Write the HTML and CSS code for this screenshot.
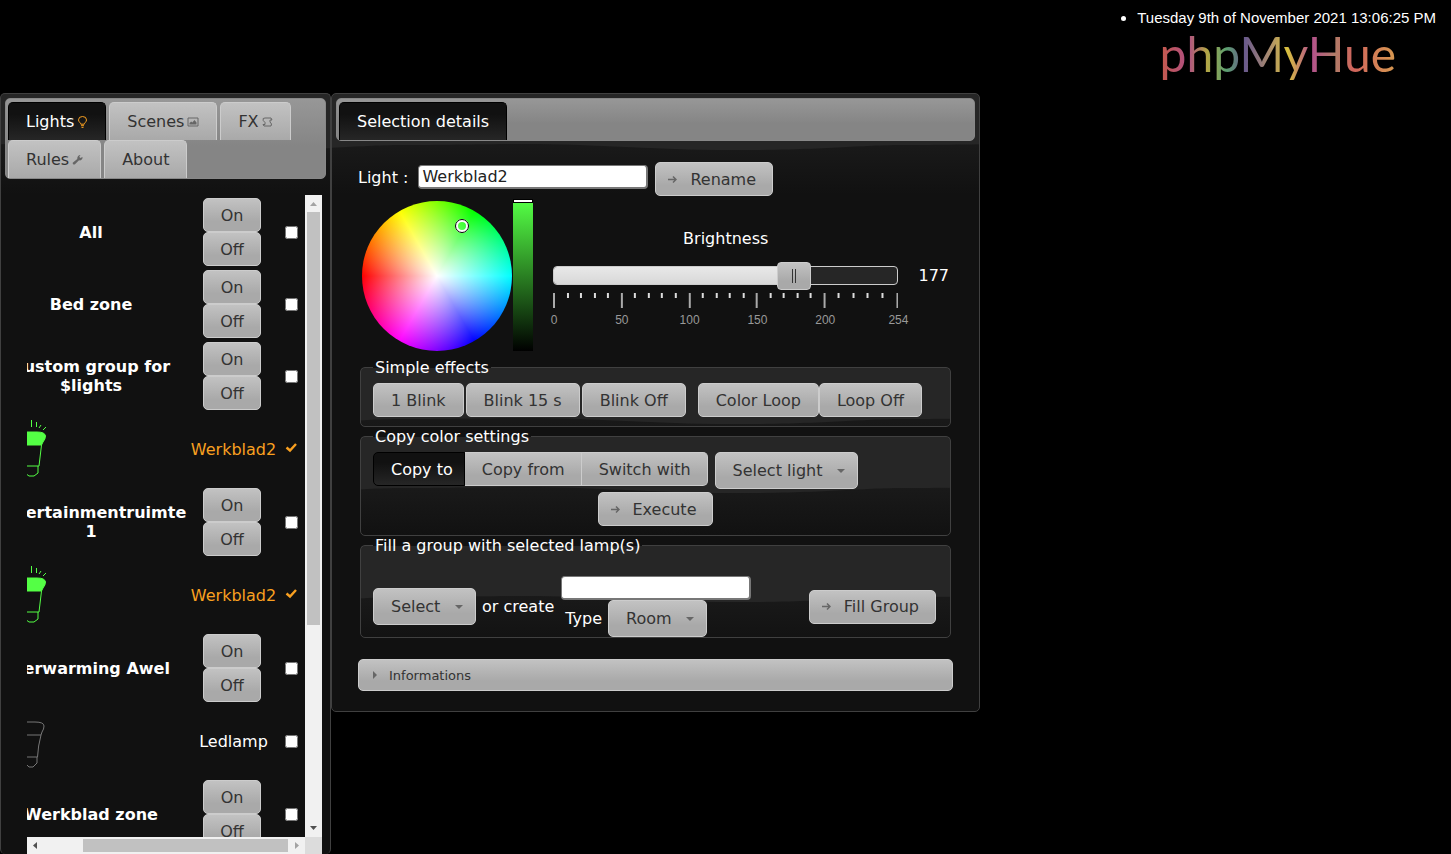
FILE: index.html
```html
<!DOCTYPE html>
<html lang="en">
<head>
  <meta charset="UTF-8" />
  <meta name="viewport" content="width=device-width, initial-scale=1.0" />
  <title>phpMyHue</title>
  <link rel="stylesheet" href="styles.css">
</head>
<body>

  <header class="top">
    <ul class="clock">
      <li>Tuesday 9th of November 2021 13:06:25 PM</li>
    </ul>
    <div class="logo">phpMyHue</div>
  </header>

  <main class="columns">

    <!-- Lights list -->
    <section class="panel lights">
      <nav class="tabs">
        <a href="#lights" class="tab active">Lights<svg width="11" height="12" viewBox="0 0 11 12"><path d="M3.800 8.200C3.800 6.800 1.500 6 1.500 3.900a4 3.400 0 0 1 8 0c0 2.100-2.200 2.900-2.200 4.300zM4 9.700h3M4.500 11.400h2" /></svg></a>
        <a href="#scenes" class="tab">Scenes<svg width="12" height="10" viewBox="0 0 12 10"><path d="M1 1h10v8H1z" /><path class="solid" d="M2.500 7.500V6l1.700-1.500L5.300 5.500 7.500 3l2 2.500v2z" /></svg></a>
        <a href="#fx" class="tab">FX<svg width="11" height="10" viewBox="0 0 11 10"><path d="M3 1h6L10 3H8v2l1.500 2-.5 2H2L1 7.500h2V5.500L1.200 3.500 1.200 1.500z" /></svg></a>
        <a href="#rules" class="tab">Rules<svg width="11" height="11" viewBox="0 0 11 11"><path class="solid" d="M1 8.500 5.300 5C5 3 6.300 1 8.500 1L7.300 2.800l1 1.200L10.500 3c.3 2.200-1.500 3.800-3.500 3.300L3 10.300C1.800 11.300 0 9.700 1 8.500z" /></svg></a>
        <a href="#about" class="tab">About</a>
      </nav>

      <div class="scroller">
        <div class="viewport">
          <table class="light-list">
            <colgroup><col class="col-name"><col class="col-action"><col class="col-check"></colgroup>
            <tr>
              <th>All</th>
              <td><button class="btn">On</button><button class="btn">Off</button></td>
              <td><input type="checkbox" aria-label="All"></td>
            </tr>
            <tr>
              <th>Bed zone</th>
              <td><button class="btn">On</button><button class="btn">Off</button></td>
              <td><input type="checkbox" aria-label="Bed zone"></td>
            </tr>
            <tr>
              <th>Custom group for $lights</th>
              <td><button class="btn">On</button><button class="btn">Off</button></td>
              <td><input type="checkbox" aria-label="Custom group for $lights"></td>
            </tr>
            <tr class="lamp selected">
              <td><svg class="bulb" width="32" height="58" viewBox="0 0 32 58"><path class="glass" d="M2 16Q3 12 9 12H22Q30 12 30.500 16Q30.500 19 28 22L26.500 25H6Z" /><path d="M26.500 25 24 46H8L6 25M23 46V53L19 56H14L10 53V46M11.500 1v6M16.500 0v7M21.500 2v5M26 5l-2 3M31 7l-3 3M7 3l1 4M2 6l2 3" /></svg></td>
              <td><label for="werk1">Werkblad2</label></td>
              <td><input type="checkbox" id="werk1" checked></td>
            </tr>
            <tr>
              <th>Entertainmentruimte 1</th>
              <td><button class="btn">On</button><button class="btn">Off</button></td>
              <td><input type="checkbox" aria-label="Entertainmentruimte 1"></td>
            </tr>
            <tr class="lamp selected">
              <td><svg class="bulb" width="32" height="58" viewBox="0 0 32 58"><path class="glass" d="M2 16Q3 12 9 12H22Q30 12 30.500 16Q30.500 19 28 22L26.500 25H6Z" /><path d="M26.500 25 24 46H8L6 25M23 46V53L19 56H14L10 53V46M11.500 1v6M16.500 0v7M21.500 2v5M26 5l-2 3M31 7l-3 3M7 3l1 4M2 6l2 3" /></svg></td>
              <td><label for="werk2">Werkblad2</label></td>
              <td><input type="checkbox" id="werk2" checked></td>
            </tr>
            <tr>
              <th>Verwarming Awel</th>
              <td><button class="btn">On</button><button class="btn">Off</button></td>
              <td><input type="checkbox" aria-label="Verwarming Awel"></td>
            </tr>
            <tr class="lamp">
              <td><svg class="bulb off" width="32" height="58" viewBox="0 0 32 58"><path d="M2 14Q3 10 9 10H20Q29 10 29 14Q29 17 27 20L26 23Q23 34 22.500 45H8L6 23ZM6 23H26M22 45V51L18 55H14L10 51V45" /></svg></td>
              <td><label for="ledlamp">Ledlamp</label></td>
              <td><input type="checkbox" id="ledlamp"></td>
            </tr>
            <tr>
              <th>Werkblad zone</th>
              <td><button class="btn">On</button><button class="btn">Off</button></td>
              <td><input type="checkbox" aria-label="Werkblad zone"></td>
            </tr>
          </table>
        </div>
        <div class="bar vertical">
          <svg width="17" height="17" viewBox="0 0 17 17"><path class="dim" d="M5 11h7L8.500 7z" /></svg>
          <div class="track"><div class="thumb"></div></div>
          <svg width="17" height="17" viewBox="0 0 17 17"><path d="M5 6h7l-3.500 4z" /></svg>
        </div>
        <div class="bar horizontal">
          <svg width="17" height="17" viewBox="0 0 17 17"><path d="M10 5v7L6 8.500z" /></svg>
          <div class="track"><div class="thumb"></div></div>
          <svg width="17" height="17" viewBox="0 0 17 17"><path class="dim" d="M7 5v7l4-3.500z" /></svg>
        </div>
        <div class="corner"></div>
      </div>
    </section>

    <!-- Selection details -->
    <section class="panel details">
      <nav class="tabs">
        <a href="#details" class="tab active">Selection details</a>
      </nav>

      <div class="details-body">
        <form class="rename">
          <label for="lightName">Light :</label>
          <input type="text" id="lightName" class="text-input" value="Werkblad2">
          <button type="button" class="btn btn-arrow">Rename</button>
        </form>

        <div class="color-row">
          <div class="wheel"><span class="wheel-marker"></span></div>
          <div class="shade">
            <input type="range" class="shade-range" min="0" max="100" value="100" aria-label="Shade">
          </div>
          <div class="brightness">
            <label for="brightness">Brightness</label>
            <div class="slider">
              <div class="slider-fill" style="width: 69.700%"></div>
              <input type="range" id="brightness" class="slider-range" min="0" max="254" value="177">
            </div>
            <svg class="ticks" viewBox="0 0 346 15" preserveAspectRatio="none">
              <path class="major" d="M1 0v15M69 0v15M137 0v15M204 0v15M272 0v15M345 0v15" />
              <path class="minor" d="M15 0v5M28 0v5M42 0v5M55 0v5M82 0v5M96 0v5M109 0v5M123 0v5M150 0v5M164 0v5M177 0v5M191 0v5M218 0v5M231 0v5M245 0v5M258 0v5M286 0v5M301 0v5M315 0v5M330 0v5" />
            </svg>
            <div class="scale">
              <span>0</span><span>50</span><span>100</span><span>150</span><span>200</span><span>254</span>
            </div>
          </div>
          <output class="level" for="brightness">177</output>
        </div>

        <fieldset class="box">
          <legend>Simple effects</legend>
          <div class="effects">
            <div class="group">
              <button class="btn">1 Blink</button>
              <button class="btn">Blink 15 s</button>
              <button class="btn">Blink Off</button>
            </div>
            <div class="group tight">
              <button class="btn">Color Loop</button>
              <button class="btn">Loop Off</button>
            </div>
          </div>
        </fieldset>

        <fieldset class="box">
          <legend>Copy color settings</legend>
          <div class="copy">
            <div class="segmented">
              <input type="radio" name="copy" id="copyTo" checked><label for="copyTo">Copy to</label>
              <input type="radio" name="copy" id="copyFrom"><label for="copyFrom">Copy from</label>
              <input type="radio" name="copy" id="switchWith"><label for="switchWith">Switch with</label>
            </div>
            <select class="select" aria-label="Light">
              <option>Select light</option>
            </select>
          </div>
          <div class="execute">
            <button class="btn btn-arrow">Execute</button>
          </div>
        </fieldset>

        <fieldset class="box fill-box">
          <legend>Fill a group with selected lamp(s)</legend>
          <div class="fill">
            <select class="select" aria-label="Group">
              <option>Select</option>
            </select>
            <label for="groupName" class="or">or create</label>
            <div class="create">
              <input type="text" id="groupName" class="text-input">
              <div class="type">
                <label for="groupType">Type</label>
                <select class="select" id="groupType">
                  <option>Room</option>
                </select>
              </div>
            </div>
            <button class="btn btn-arrow fill-btn">Fill Group</button>
          </div>
        </fieldset>

        <button class="info">Informations</button>
      </div>
    </section>

  </main>

</body>
</html>
```
FILE: styles.css
```css
* {
  box-sizing: border-box;
}

body {
  margin: 0;
  height: 100vh;
  display: flex;
  flex-direction: column;
  overflow: hidden;
  background-color: #000;
  color: #fff;
  font-family: "DejaVu Sans", Verdana, sans-serif;
  font-size: 16px;
}

button,
input,
select {
  font: inherit;
  margin: 0;
}

/* Header */
.top {
  flex: none;
  height: 93px;
  padding: 8px 15px 0;
  display: flex;
  flex-direction: column;
  align-items: flex-end;
}

.clock {
  margin: 0;
  padding-left: 20px;
  font-family: "Liberation Sans", Arial, sans-serif;
  font-size: 15px;
  line-height: 20px;
}

.logo {
  margin-right: 40px;
  font-family: Lato, sans-serif;
  font-weight: 400;
  font-size: 48px;
  line-height: 52px;
  color: transparent;
  background: linear-gradient(90deg, #c65a4a 0%, #b04f83 12%, #b3a745 20%, #5ba070 28%, #6a5a8c 36%, #a88a70 46%, #d8c03e 54%, #b4508c 64%, #b07c68 74%, #d0645c 82%, #d89a50 100%);
  -webkit-background-clip: text;
  background-clip: text;
}

/* Panels */
.columns {
  flex: 1;
  min-height: 0;
  display: grid;
  grid-template-columns: 331fr 649fr 471fr;
  grid-template-rows: minmax(0, 1fr);
  align-items: start;
}

.panel,
.box {
  border: 1px solid #404040;
  border-radius: 5px;
  background-color: #111;
  background-image:
    url("data:image/svg+xml,%3Csvg xmlns='http://www.w3.org/2000/svg' width='500' height='100'%3E%3Cpath d='M0 0H500V51C450 51 420 56 330 56S200 50 120 50C70 50 40 51 0 51Z' fill='%23262626'/%3E%3C/svg%3E"),
    linear-gradient(#222, #111);
  background-size: 500px 100px, 100% 100px;
  background-position: top center;
  background-repeat: repeat-x, no-repeat;
}

.panel {
  padding: 4px;
}

.lights {
  height: 100%;
  display: flex;
  flex-direction: column;
  border-bottom: 0;
}

.tabs {
  display: flex;
  flex-wrap: wrap;
  column-gap: 3px;
  padding: 3px 2px 0;
  border: 1px solid #888;
  border-radius: 5px;
  background: linear-gradient(#979797, #858585 60%);
}

.tab {
  display: flex;
  align-items: center;
  height: 38px;
  padding: 0 17px;
  border: 1px solid #ccc;
  border-bottom: 0;
  border-radius: 5px 5px 0 0;
  background: linear-gradient(#c2c2c2, #a9a9a9);
  color: #333;
  text-decoration: none;
}

.tab.active {
  border-color: #000;
  background: linear-gradient(#111 30%, #262626);
  color: #fff;
}

.tab svg {
  margin-left: 3px;
  fill: none;
  stroke: #666;
}

.tab .solid {
  fill: #666;
  stroke: none;
}

.tab.active svg {
  stroke: #f9a020;
}

/* Lights list */
.scroller {
  flex: 1;
  min-height: 0;
  margin: 16px 4px -4px 22px;
  display: grid;
  grid-template-columns: 1fr 17px;
  grid-template-rows: minmax(0, 1fr) 17px;
}

.viewport {
  display: flex;
  justify-content: flex-end;
  align-items: flex-start;
  overflow: hidden;
}

.light-list {
  flex: none;
  width: 312px;
  margin-top: 1px;
  table-layout: fixed;
  border-collapse: collapse;
  text-align: center;
}

.col-name {
  width: 196px;
}

.col-action {
  width: 89px;
}

.light-list tr {
  height: 72px;
}

.light-list .lamp {
  height: 74px;
}

.light-list th,
.light-list td {
  padding: 0;
  line-height: 19px;
}

.light-list .btn {
  display: block;
  width: 58px;
  margin: 0 0 0 14px;
  padding: 0;
}

.light-list input {
  display: block;
  width: 13px;
  height: 13px;
  margin: 0 auto;
}

.selected {
  color: #f9a020;
}

.selected input {
  appearance: none;
  background: url("data:image/svg+xml,%3Csvg xmlns='http://www.w3.org/2000/svg' viewBox='0 0 13 13'%3E%3Cpath d='M1.500 4.500 5 7.500 11 1' fill='none' stroke='%23f9a020' stroke-width='2.400'/%3E%3C/svg%3E");
}

.bulb {
  display: block;
  margin-left: 22px;
  fill: none;
  stroke: #54ff45;
}

.glass {
  fill: #54ff45;
}

.bulb.off {
  stroke: #777;
}

/* Scroll bars */
.bar {
  display: flex;
  background-color: #f1f1f1;
}

.bar svg {
  flex: none;
  fill: #505050;
}

.bar .dim {
  fill: #a3a3a3;
}

.vertical {
  flex-direction: column;
}

.track {
  flex: 1;
}

.thumb {
  background-color: #c1c1c1;
}

.vertical .thumb {
  height: 68%;
  margin: 0 2px;
}

.horizontal .thumb {
  width: 84%;
  height: 13px;
  margin: 2px 0 0 auto;
}

.corner {
  background-color: #dcdcdc;
}

/* Buttons and fields */
.btn,
.select,
.segmented label,
.info {
  border: 1px solid #ccc;
  border-radius: 5px;
  background: linear-gradient(#c2c2c2, #a9a9a9 70%);
  color: #333;
  cursor: pointer;
}

.btn {
  height: 34px;
  padding: 0 17px;
}

.btn-arrow {
  padding: 0 16px 0 34px;
  background:
    url("data:image/svg+xml,%3Csvg xmlns='http://www.w3.org/2000/svg' width='9' height='9'%3E%3Cpath d='M0 4.500H7M5 1.500 8 4.500 5 7.500' fill='none' stroke='%23666' stroke-width='1.500'/%3E%3C/svg%3E") 12px center no-repeat,
    linear-gradient(#c2c2c2, #a9a9a9 70%);
}

.select {
  appearance: none;
  height: 37px;
  padding: 0 34px 0 17px;
  background:
    url("data:image/svg+xml,%3Csvg xmlns='http://www.w3.org/2000/svg' width='8' height='4'%3E%3Cpath d='M0 0H8L4 4Z' fill='%23666'/%3E%3C/svg%3E") right 12px center no-repeat,
    linear-gradient(#c2c2c2, #a9a9a9 70%);
}

.text-input {
  width: 230px;
  height: 24px;
  padding: 0 3px;
  border: 1px solid #777;
  border-width: 1px 2px 2px 1px;
  border-radius: 4px;
  background-color: #fff;
  color: #222;
}

/* Selection details */
.details-body {
  padding: 21px 22px 16px;
}

.rename {
  display: flex;
  align-items: flex-start;
  gap: 7px;
}

.rename label {
  margin-right: 3px;
  line-height: 31px;
}

.rename .text-input {
  margin-top: 3px;
}

.color-row {
  display: flex;
  padding: 5px 4px 7px;
}

.wheel {
  position: relative;
  flex: none;
  width: 150px;
  height: 150px;
  border-radius: 50%;
  background:
    radial-gradient(closest-side, #fff, rgba(255, 255, 255, 0)),
    conic-gradient(from 270deg, #f00, #ff0, #0f0, #0ff, #00f, #f0f, #f00);
}

.wheel-marker {
  position: absolute;
  left: 93px;
  top: 18px;
  width: 14px;
  height: 14px;
  border: 3px solid #fff;
  outline: 1px solid #000;
  outline-offset: -1px;
  border-radius: 50%;
}

.shade {
  position: relative;
  flex: none;
  width: 20px;
  height: 150px;
  margin-left: 1px;
  background: linear-gradient(#54ff45, #000);
}

.shade-range {
  position: absolute;
  top: -2px;
  left: 0;
  width: 20px;
  height: 154px;
  appearance: none;
  writing-mode: vertical-lr;
  direction: rtl;
  background: none;
}

.shade-range::-webkit-slider-thumb {
  appearance: none;
  width: 20px;
  height: 4px;
  border: 1px solid #000;
  background-color: #fff;
}

.brightness {
  flex: 1;
  margin: 28px 20px 0;
  display: flex;
  flex-direction: column;
}

.brightness label {
  align-self: center;
  line-height: 20px;
}

.slider {
  position: relative;
  height: 19px;
  margin-top: 17px;
  border: 1px solid #ccc;
  border-radius: 4px;
  background-color: #262626;
}

.slider-fill {
  height: 100%;
  border-radius: 3px 0 0 3px;
  background: linear-gradient(#e8e8e8, #d8d8d8);
}

.slider-range {
  position: absolute;
  top: -6px;
  left: -18px;
  width: calc(100% + 36px);
  height: 29px;
  appearance: none;
  background: none;
}

.slider-range::-webkit-slider-thumb {
  appearance: none;
  width: 34px;
  height: 28px;
  border: 1px solid #ccc;
  border-radius: 4px;
  background:
    linear-gradient(90deg, #333 1px, transparent 1px 3px, #333 3px) center / 4px 14px no-repeat,
    linear-gradient(#c2c2c2, #a9a9a9 70%);
}

.ticks {
  width: 100%;
  height: 15px;
  margin-top: 8px;
  stroke-width: 2;
}

.major {
  stroke: #aaa;
}

.minor {
  stroke: #ddd;
}

.scale {
  display: grid;
  grid-template-columns: 50fr 50fr 50fr 50fr 54fr 0;
  margin-top: 4px;
  padding-left: 1px;
  color: #999;
  font-family: "Liberation Sans", Arial, sans-serif;
  font-size: 12px;
  line-height: 16px;
}

.scale span {
  width: 0;
  display: flex;
  justify-content: center;
}

.level {
  margin-top: 65px;
  line-height: 20px;
}

.box {
  min-width: 0;
  margin: 0 2px;
  padding: 6px 12px 9px;
}

.box legend {
  padding: 1px 2px 0;
  line-height: 18px;
}

.effects,
.copy,
.segmented,
.group {
  display: flex;
}

.effects {
  gap: 12px;
}

.group {
  gap: 2px;
}

.tight {
  gap: 0;
}

.copy {
  gap: 7px;
}

.segmented input {
  position: absolute;
  opacity: 0;
}

.segmented label {
  height: 34px;
  padding: 0 16px 0 17px;
  line-height: 34px;
  border-radius: 0;
  border-left-width: 0;
}

.segmented label:first-of-type {
  border-left-width: 1px;
  border-radius: 5px 0 0 5px;
  padding-right: 11px;
}

.segmented label:last-of-type {
  border-radius: 0 5px 5px 0;
}

.segmented input:checked + label {
  border-color: #000;
  background: linear-gradient(#111 30%, #262626);
  color: #fff;
}

.execute {
  display: flex;
  justify-content: center;
  margin-top: 3px;
}

.fill-box {
  padding-bottom: 0;
}

.fill {
  display: flex;
  align-items: center;
  padding-top: 15px;
}

.or {
  margin: 0 7px 0 6px;
}

.create .text-input {
  display: block;
  width: 190px;
}

.type {
  display: flex;
  align-items: center;
  gap: 6px;
  padding-left: 4px;
}

.fill-btn {
  margin: 0 2px 0 auto;
}

.info {
  display: block;
  width: 100%;
  height: 32px;
  margin-top: 21px;
  padding: 0 30px;
  font-size: 13px;
  text-align: left;
  background:
    url("data:image/svg+xml,%3Csvg xmlns='http://www.w3.org/2000/svg' width='4' height='8'%3E%3Cpath d='M0 0V8L4 4Z' fill='%23666'/%3E%3C/svg%3E") 14px center no-repeat,
    linear-gradient(#c2c2c2, #a9a9a9 70%);
}
```
